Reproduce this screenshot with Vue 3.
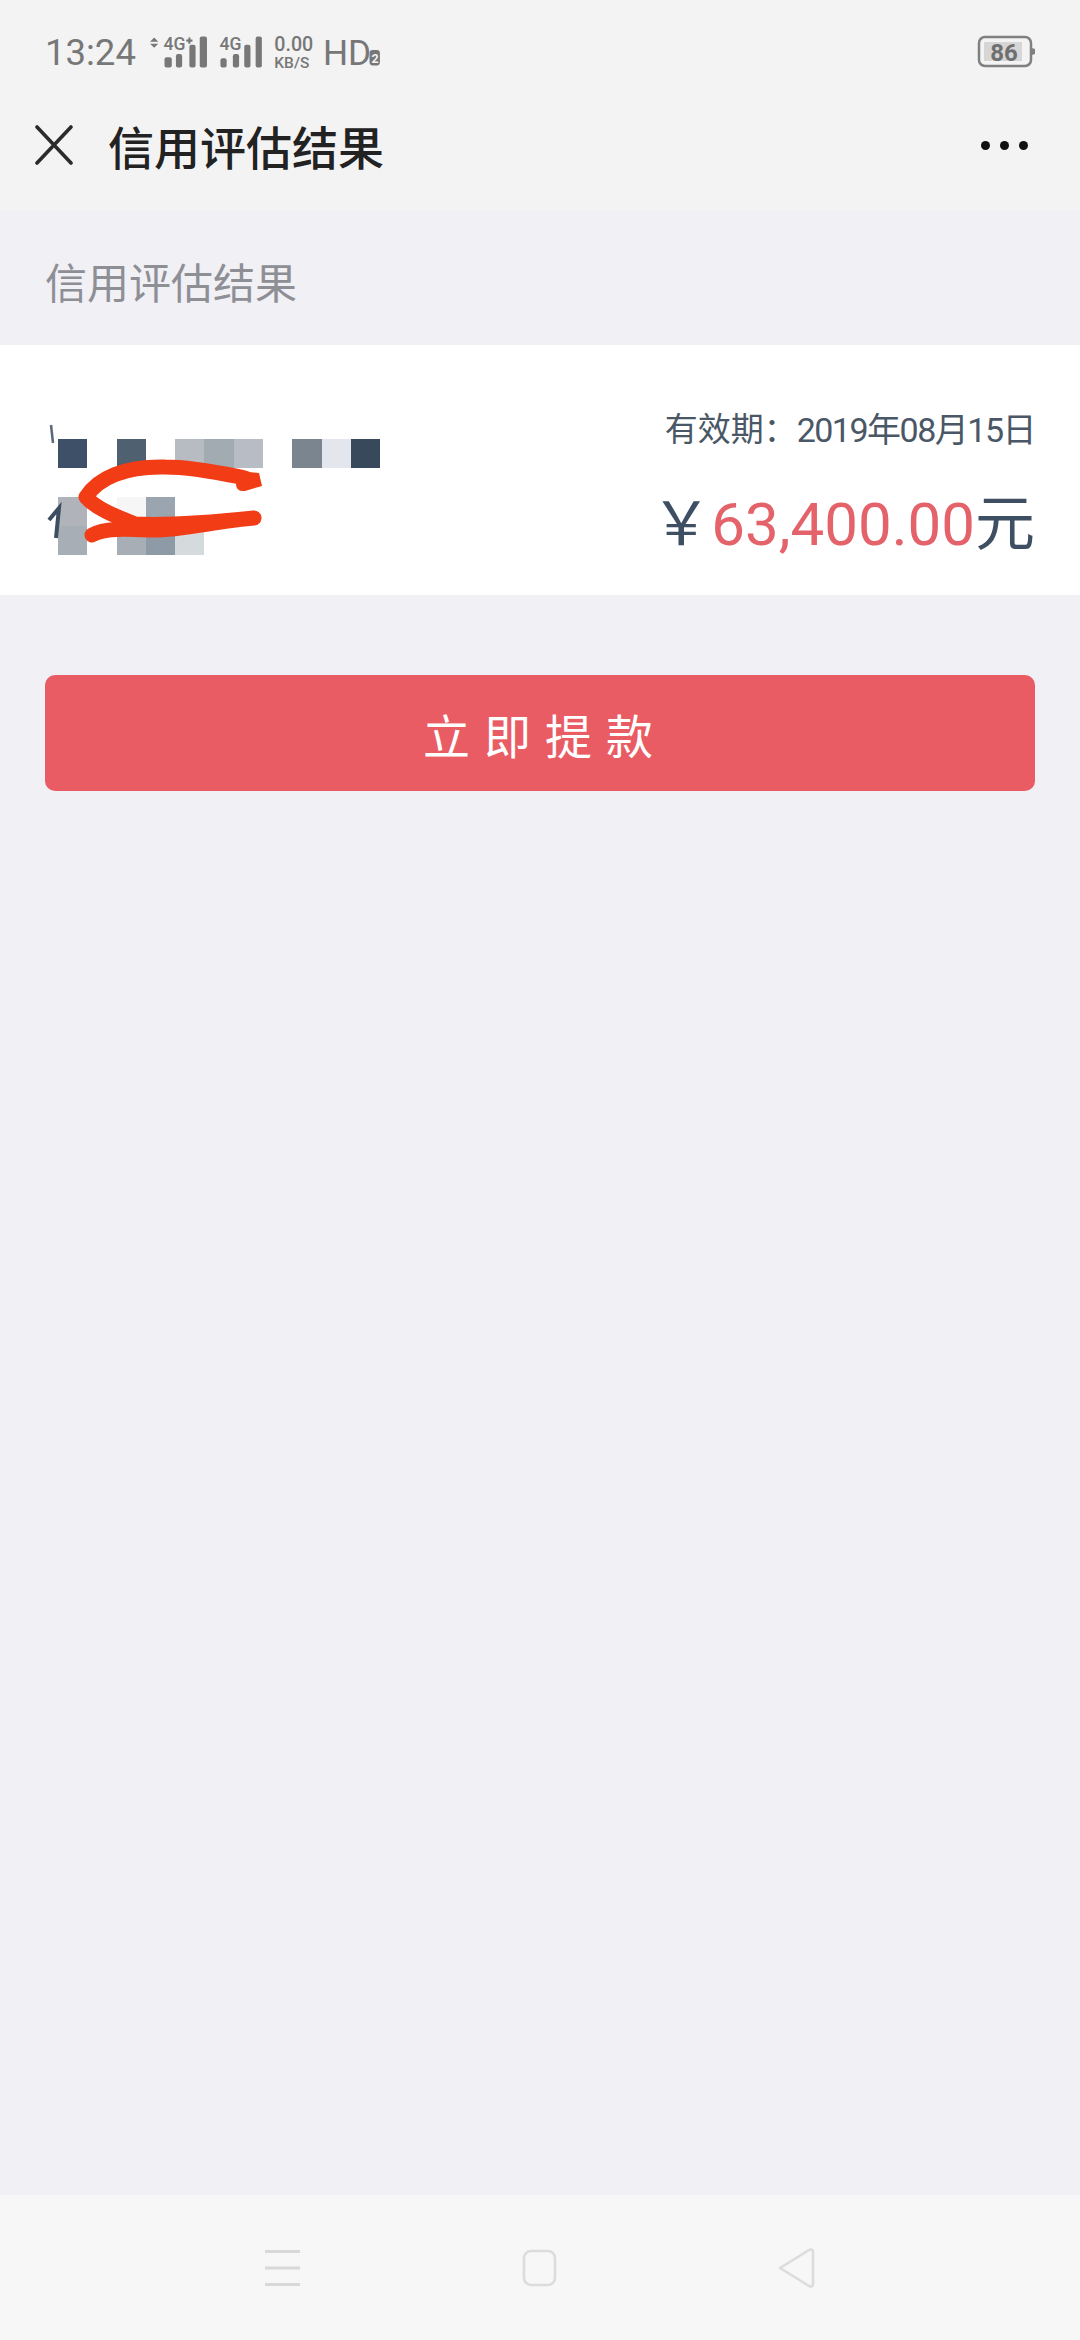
<script setup>
const mosaic = [
    ["#3d5068", "", "#4f6070", "", "#b7bcc2", "#a3abb2", "#b8bdc5", "", "#7a858f", "#e3e6ed", "#39495c"],
    ["", "", "", "", "", "", "", "", "", "", ""],
    ["#b0b4ba", "", "#f6f6f7", "#9aa5af", "", "", "", "", "", "", ""],
    ["#a7aeb5", "", "#a7aeb5", "#8e9aa6", "#d5dadd", "", "", "", "", "", ""],
];
</script>

<template>
    <div class="page">
        <header class="top">
            <div class="status">
                <span class="time">13:24</span>
                <svg class="signal" width="234" height="42" viewBox="144 32 226 40">
                    <path d="M149 38l4 4h-8zM149 48l-4-4h8z" fill="#777" />
                    <text x="158" y="50" class="tiny">4G</text>
                    <path d="M180 41h6M183 38v6" stroke="#777" stroke-width="2" />
                    <g fill="#777">
                        <rect x="159" y="57" width="7" height="10" rx="2" />
                        <rect x="170" y="54" width="6" height="13" rx="2" />
                        <rect x="183" y="45" width="6" height="22" rx="2" />
                        <rect x="193" y="37" width="7" height="30" rx="2" />
                        <rect x="213" y="58" width="6" height="9" rx="2" />
                        <rect x="225" y="54" width="6" height="13" rx="2" />
                        <rect x="236" y="45" width="6" height="22" rx="2" />
                        <rect x="247" y="37" width="6" height="30" rx="2" />
                    </g>
                    <text x="212" y="50" class="tiny">4G</text>
                    <text x="265" y="51" class="speed">0.00</text>
                    <text x="265" y="67" class="unit">KB/S</text>
                    <text x="312" y="65" class="hd">HD</text>
                    <rect x="357" y="50" width="10" height="15" rx="3" fill="#777" />
                    <text x="359" y="63" class="sim">2</text>
                </svg>
                <svg class="battery" width="60" height="34" viewBox="0 0 60 34">
                    <rect x="2" y="2" width="52" height="29" rx="6" fill="none" stroke="#808080" stroke-width="2.5" />
                    <rect x="7" y="7" width="38" height="19" fill="#d6d6d6" />
                    <path d="M55 13l3 1v5l-3 1z" fill="#808080" />
                    <text x="27" y="26" text-anchor="middle" class="level">86</text>
                </svg>
            </div>
            <div class="nav-bar">
                <svg class="close" width="38" height="40" viewBox="0 0 38 40">
                    <path d="M2 2L36 38M36 2L2 38" stroke="#2b2b2b" stroke-width="3.6" stroke-linecap="round" />
                </svg>
                <h1 class="title">信用评估结果</h1>
                <div class="more">
                    <span class="dot"></span>
                    <span class="dot"></span>
                    <span class="dot"></span>
                </div>
            </div>
        </header>

        <main class="content">
            <div class="section-label">信用评估结果</div>
            <section class="card">
                <div class="mosaic">
                    <div class="mosaic-row" v-for="(row, r) in mosaic" :key="r">
                        <span
                            class="cell"
                            v-for="(color, c) in row"
                            :key="c"
                            :style="{ background: color || 'transparent' }"
                        ></span>
                    </div>
                </div>
                <div class="quota">
                    <div class="validity">有效期&#xFF1A;<span class="date">2019年08月15日</span></div>
                    <div class="amount">
                        <span class="yen">&#xFFE5;</span><span class="money">63,400.00</span><span class="yuan">元</span>
                    </div>
                </div>
                <svg class="scribble" width="400" height="250" viewBox="0 345 400 250">
                    <path d="M51 425l2 18" stroke="#5a6878" stroke-width="2.5" fill="none" />
                    <path d="M49 520l10-12-3 30" stroke="#3d4e63" stroke-width="4" fill="none" />
                    <path
                        d="M245 478C225 474 195 467 165 467C125 466 98 478 86 497C95 508 115 516 135 524C175 526 225 521 254 518M92 535C105 528 125 529 150 530C180 531 215 521 254 518"
                        stroke="#f23c15"
                        stroke-width="15"
                        stroke-linecap="round"
                        stroke-linejoin="round"
                        fill="none"
                    />
                    <path d="M259 473L262 486L245 491Q236 492 236 484L240 471Z" fill="#f23c15" />
                </svg>
            </section>
            <button class="withdraw">立即提款</button>
        </main>

        <footer class="sys-nav">
            <svg width="37" height="38" viewBox="0 0 37 38">
                <path d="M1 2.500H36M1 19H36M1 35.500H36" stroke="#d8d8d8" stroke-width="3" />
            </svg>
            <svg width="35" height="38" viewBox="0 0 35 38">
                <rect x="2" y="2" width="31" height="34" rx="7" fill="none" stroke="#dcdcdc" stroke-width="2.6" />
            </svg>
            <svg width="38" height="42" viewBox="0 0 38 42">
                <path d="M3 21L32 3Q36 1.500 36 5V37Q36 40.500 32 39Z" fill="none" stroke="#dcdcdc" stroke-width="2.6" stroke-linejoin="round" />
            </svg>
        </footer>
    </div>
</template>

<style scoped>
.page {
    width: 1080px;
    height: 2340px;
    display: flex;
    flex-direction: column;
    background: #f0f0f5;
    font-family: Roboto, "Noto Sans CJK SC", sans-serif;
}

.top {
    height: 210px;
    background: #f3f3f4;
}

.status {
    height: 100px;
    display: flex;
    align-items: center;
    padding: 0 45px;
    color: #777;
}

.time {
    font-size: 36.500px;
    width: 104px;
    margin-top: 4px;
}

.signal {
    margin-top: 4px;
}

.battery {
    margin-left: auto;
    margin-right: -2px;
    margin-top: 4px;
}

.tiny {
    font: 500 17px Roboto, sans-serif;
    fill: #777;
}

.speed {
    font: 500 19px Roboto, sans-serif;
    fill: #777;
}

.unit {
    font: 500 15px Roboto, sans-serif;
    fill: #777;
}

.hd {
    font: 400 34px Roboto, sans-serif;
    fill: #777;
}

.sim {
    font: 700 12px Roboto, sans-serif;
    fill: #f3f3f4;
}

.level {
    font: 700 24px Roboto, sans-serif;
    fill: #6f6f6f;
}

.nav-bar {
    height: 94px;
    display: flex;
    align-items: center;
    padding: 0 34px 5px 35px;
    box-sizing: border-box;
}

.title {
    margin: 0 0 0 35px;
    font-size: 46px;
    font-weight: 500;
    color: #222;
}

.more {
    margin-left: auto;
    display: flex;
    gap: 10px;
    padding: 2px 18px 0 0;
}

.dot {
    width: 9px;
    height: 9px;
    border-radius: 50%;
    background: #111;
}

.content {
    flex: 1;
}

.section-label {
    height: 135px;
    padding: 50px 45px 0;
    box-sizing: border-box;
    font-size: 42px;
    line-height: 50px;
    color: #8e8e95;
}

.card {
    position: relative;
    height: 250px;
    background: #fff;
    display: flex;
    justify-content: space-between;
    padding: 0 45px 0 58px;
    box-sizing: border-box;
}

.mosaic {
    padding-top: 94px;
}

.mosaic-row {
    display: flex;
    height: 29px;
}

.cell {
    width: 29.300px;
    height: 29px;
}

.quota {
    display: flex;
    flex-direction: column;
    align-items: flex-end;
    padding-top: 60px;
}

.validity {
    font-size: 33px;
    line-height: 50px;
    color: #4a5766;
    display: flex;
}

.date {
    font-size: 34px;
    letter-spacing: -1.500px;
}

.amount {
    margin-top: 32px;
    line-height: 76px;
    color: #3f4f63;
    display: flex;
    align-items: baseline;
}

.yen {
    font-size: 60px;
}

.money {
    font-size: 60px;
    color: #e4626a;
}

.yuan {
    font-size: 60px;
}

.scribble {
    position: absolute;
    left: 0;
    top: 0;
}

.withdraw {
    display: block;
    width: 990px;
    height: 116px;
    margin: 80px 45px 0;
    padding: 0 0 0 10px;
    border: none;
    border-radius: 10px;
    background: #e95c63;
    color: #fff;
    font-family: inherit;
    font-size: 47px;
    letter-spacing: 14px;
}

.sys-nav {
    height: 145px;
    background: #f7f7f7;
    display: flex;
    align-items: center;
    justify-content: space-between;
    padding: 0 265px 0 264px;
    box-sizing: border-box;
}
</style>
